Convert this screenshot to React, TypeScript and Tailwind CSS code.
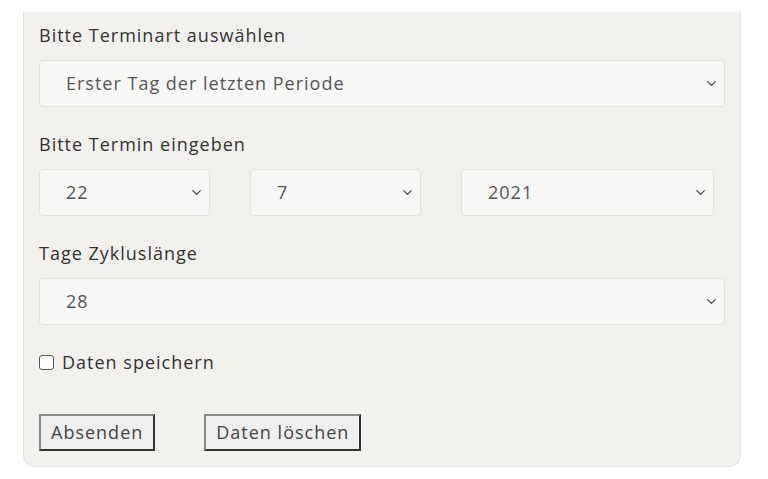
import { ChevronDown } from "lucide-react";

const font = { fontFamily: '"Open Sans", "DejaVu Sans", sans-serif' };

function Select({ value, className }: { value: string; className?: string }) {
  return (
    <div
      className={`flex h-[47px] items-center justify-between rounded-[4px] border border-[#e4e2df] bg-[#f8f8f7] pl-[26px] pr-[5px] ${className ?? ""}`}
    >
      <span className="text-[18px] tracking-[1px] text-[#555]">{value}</span>
      <ChevronDown className="h-[15px] w-[15px] text-[#444]" strokeWidth={2} />
    </div>
  );
}

export default function App() {
  return (
    <div className="min-h-[479px] bg-white pt-[12px]" style={font}>
      <div className="ml-[23px] w-[718px] rounded-b-[12px] border-x border-b border-[#e6e4e0] bg-[#f2f1ee] px-[15px] pb-[15px] pt-[10px] tracking-[1px]">
        <div className="text-[18px] font-medium text-[#333]">Bitte Terminart auswählen</div>
        <Select value="Erster Tag der letzten Periode" className="mt-[11px] w-[686px]" />

        <div className="mt-[24px] text-[18px] font-medium text-[#333]">Bitte Termin eingeben</div>
        <div className="mt-[11px] flex gap-[40px]">
          <Select value="22" className="w-[171px]" />
          <Select value="7" className="w-[171px]" />
          <Select value="2021" className="w-[253px]" />
        </div>

        <div className="mt-[24px] text-[18px] font-medium text-[#333]">Tage Zykluslänge</div>
        <Select value="28" className="mt-[11px] w-[686px]" />

        <label className="mt-[24px] flex items-center gap-[8px] text-[18px] font-medium text-[#333]">
          <span className="h-[15px] w-[15px] rounded-[3px] border border-[#555] bg-white" />
          Daten speichern
        </label>

        <div className="mt-[38px] flex gap-[49px]">
          <button className="h-[37px] border-2 border-t-[#888] border-l-[#888] border-b-[#333] border-r-[#333] bg-[#efefef] px-[10px] text-[18px] tracking-[1px] text-[#444]">
            Absenden
          </button>
          <button className="h-[37px] border-2 border-t-[#888] border-l-[#888] border-b-[#333] border-r-[#333] bg-[#efefef] px-[10px] text-[18px] tracking-[1px] text-[#444]">
            Daten löschen
          </button>
        </div>
      </div>
    </div>
  );
}
